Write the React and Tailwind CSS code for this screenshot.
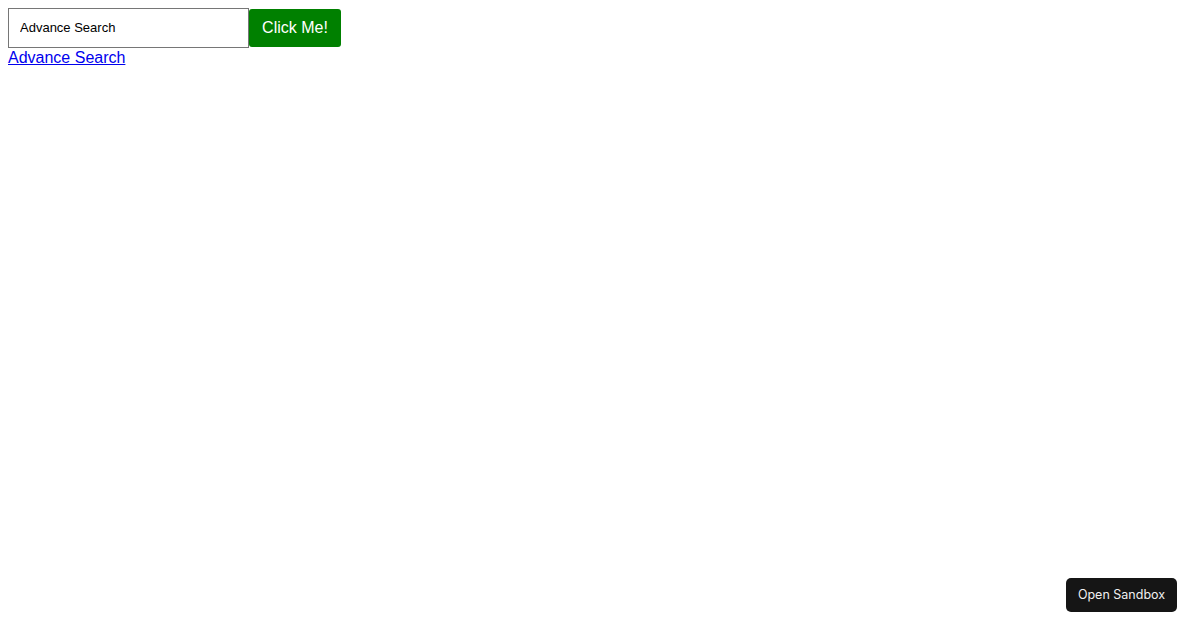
import React, { useState } from 'react';

const App = () => {
  const [query, setQuery] = useState('Advance Search');

  return (
    <div className="min-h-screen w-full bg-white p-2 relative font-['Liberation_Sans',Arial,sans-serif]">
      <div className="flex items-center">
        <input
          type="text"
          value={query}
          onChange={e => setQuery(e.target.value)}
          className="w-[241px] h-10 border border-[#767676] px-[11px] pb-[2px] text-[13px] text-black outline-none"
        />
        <button className="h-[38px] w-[92px] rounded-[3px] bg-[#008000] text-white text-base">
          Click Me!
        </button>
      </div>
      <a href="#" className="block w-fit text-base leading-[20px] text-[#0000ee] underline">
        Advance Search
      </a>

      <button className="absolute right-[23px] bottom-[18px] h-[34px] w-[111px] rounded-[5px] bg-[#151515] text-[12.5px] text-[#f0f0f0] font-['Inter',sans-serif]">
        Open Sandbox
      </button>
    </div>
  );
};

export default App;
